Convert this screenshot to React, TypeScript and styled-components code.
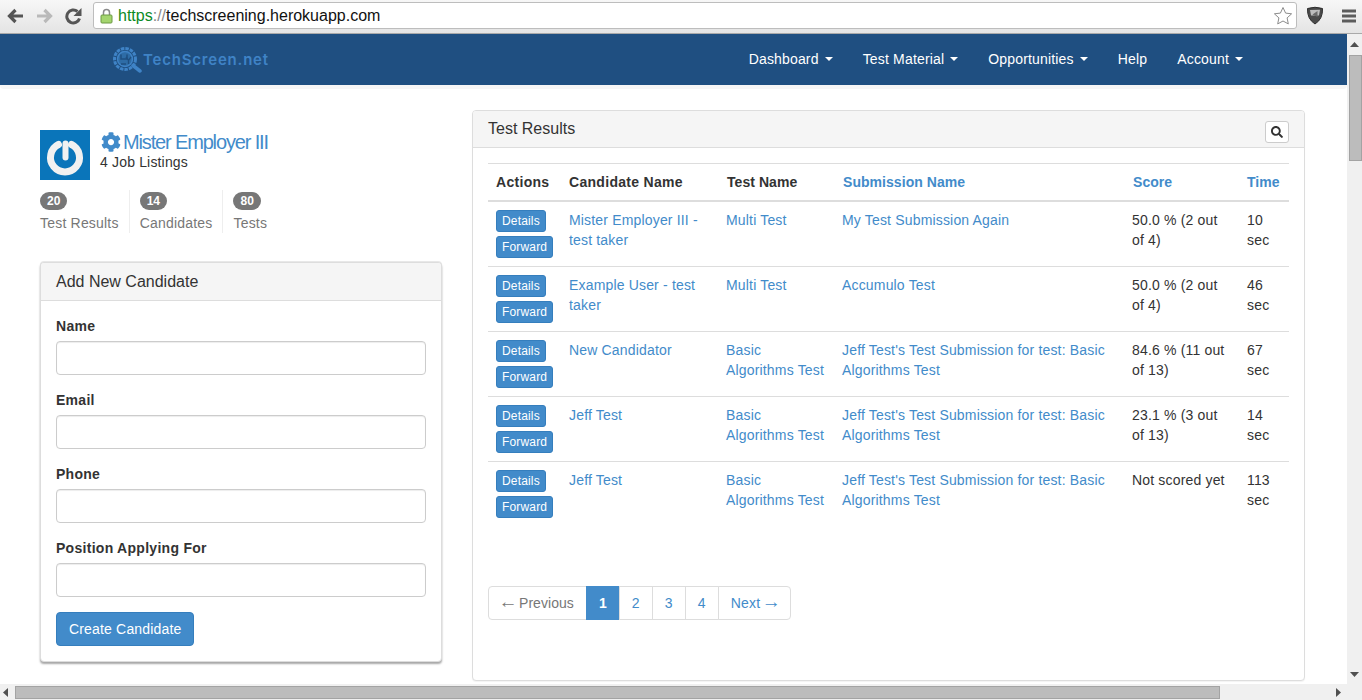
import styled, { createGlobalStyle } from "styled-components";
import { FaCog, FaSearch } from "react-icons/fa";

const GlobalStyle = createGlobalStyle`
  html, body {
    margin: 0;
    height: 100%;
    overflow: hidden;
    background: #fff;
  }

  body {
    font-family: "Liberation Sans", Arial, sans-serif;
    font-size: 14px;
    line-height: 20px;
    letter-spacing: 0.17px;
    color: #333;
  }

  * {
    box-sizing: border-box;
  }
`;

const Window = styled.div`
  width: 1362px;
  height: 700px;
  display: flex;
  flex-direction: column;
  overflow: hidden;
`;

const BrowserBar = styled.div`
  height: 34px;
  flex: none;
  display: flex;
  align-items: center;
  padding: 0 4px 2px 4px;
  background: linear-gradient(#f7f7f7, #e4e4e4);
  border-bottom: 1px solid #a9a9a9;
`;

const BarIcon = styled.svg<{ $gap?: number }>`
  flex: none;
  margin-right: ${(p) => p.$gap ?? 0}px;
`;

const AddressBox = styled.div`
  flex: none;
  width: 1204px;
  height: 27px;
  margin: 0 9px 0 9px;
  display: flex;
  align-items: center;
  padding: 0 3px 0 6px;
  background: #fff;
  border: 1px solid #bdbdbd;
  border-radius: 3px;
`;

const Url = styled.div`
  flex: 1;
  margin-left: 5px;
  font-size: 16px;
  letter-spacing: 0;
  color: #111;
  white-space: nowrap;
`;

const UrlScheme = styled.span`
  color: #0b8a24;
`;

const UrlSlashes = styled.span`
  color: #888;
`;

const Middle = styled.div`
  flex: 1;
  min-height: 0;
  display: flex;
`;

const Page = styled.div`
  flex: 1;
  min-width: 0;
  overflow: hidden;
  background: #fff;
`;

const VerticalBar = styled.div`
  width: 15px;
  flex: none;
  display: flex;
  flex-direction: column;
  align-items: center;
  background: #f0f0f0;
  padding: 8px 0 7px;
`;

const VerticalThumb = styled.div`
  width: 13px;
  height: 106px;
  margin: 8px 0 auto;
  align-self: flex-end;
  background: #bcbcbc;
  border: 1px solid #a3a3a3;
`;

const HorizontalBar = styled.div`
  height: 16px;
  flex: none;
  display: flex;
  align-items: center;
  background: #f0f0f0;
  padding-left: 3px;
`;

const HorizontalThumb = styled.div`
  width: 1205px;
  height: 13px;
  margin: 0 auto 0 7px;
  background: #bcbcbc;
  border: 1px solid #a3a3a3;
`;

const BarArrow = styled.svg<{ $right?: number }>`
  flex: none;
  margin-right: ${(p) => p.$right ?? 0}px;
`;

const NavWrap = styled.div`
  padding-bottom: 4px;
  background: #f6f6f6;
  border-radius: 0 0 4px 4px;
`;

const Navbar = styled.nav`
  height: 51px;
  display: flex;
  align-items: center;
  justify-content: space-between;
  padding: 0 89px 0 112px;
  background: #1f4f81;
`;

const Brand = styled.a`
  display: flex;
  align-items: center;
  margin-top: 1px;
`;

const BrandName = styled.span`
  font-family: Inter, sans-serif;
  font-weight: 600;
  font-size: 15px;
  letter-spacing: 0.8px;
  color: #3f83c6;
`;

const NavList = styled.div`
  display: flex;
`;

const NavItem = styled.a`
  display: flex;
  align-items: center;
  padding: 14px 15px 16px;
  color: #fff;
  font-size: 14px;
`;

const Caret = styled.span`
  width: 0;
  height: 0;
  margin-left: 6px;
  margin-top: 1px;
  border-top: 4px solid #fff;
  border-left: 4px solid transparent;
  border-right: 4px solid transparent;
`;

const Content = styled.main`
  display: flex;
  align-items: flex-start;
  gap: 30px;
  padding: 21px 42px 0 40px;
`;

const Sidebar = styled.aside`
  width: 402px;
  flex: none;
  padding-top: 20px;
`;

const Profile = styled.div`
  display: flex;
  gap: 10px;
`;

const AvatarIcon = styled.svg`
  display: block;
  flex: none;
`;

const ProfileTitle = styled.div`
  display: flex;
  align-items: center;
  height: 24px;
  color: #428bca;
  font-size: 20px;
  letter-spacing: -1.15px;
`;

const ProfileMeta = styled.div`
  margin-top: -2px;
`;

const CogIcon = styled(FaCog)`
  width: 20px;
  height: 20px;
  margin: 0 2px 0 1px;
`;

const Stats = styled.div`
  display: flex;
  margin-top: 10px;
`;

const Stat = styled.div`
  height: 43px;
  padding: 2px 10px 0;
  border-right: 1px solid #eee;
  color: #777;
  letter-spacing: 0.2px;

  &:first-child {
    padding-left: 0;
  }

  &:last-child {
    border-right: 0;
  }
`;

const Badge = styled.span`
  display: block;
  width: fit-content;
  min-width: 10px;
  height: 18px;
  padding: 3px 7px;
  margin-bottom: 3px;
  border-radius: 10px;
  background: #777;
  color: #fff;
  font-size: 12px;
  font-weight: 700;
  line-height: 12px;
  letter-spacing: 0;
`;

const Panel = styled.section<{ $raised?: boolean; $height?: number }>`
  background: #fff;
  border: 1px solid #ddd;
  border-radius: 4px;
  height: ${(p) => (p.$height ? `${p.$height}px` : "auto")};
  box-shadow: ${(p) =>
    p.$raised
      ? "0 2px 2px rgba(0, 0, 0, 0.35), 0 -1px 0 #e8e8e8"
      : "0 1px 1px rgba(0, 0, 0, 0.05)"};
`;

const PanelHeading = styled.header<{ $height?: number }>`
  display: flex;
  align-items: center;
  justify-content: space-between;
  height: ${(p) => p.$height ?? 38}px;
  padding: 0 15px;
  background: #f5f5f5;
  border-bottom: 1px solid #ddd;
  border-radius: 3px 3px 0 0;
  font-size: 16px;
  letter-spacing: 0;
  color: #333;
`;

const PanelBody = styled.div`
  padding: 15px;
`;

const FormPanel = styled(Panel)`
  margin-top: 29px;
`;

const Field = styled.div`
  margin-bottom: 15px;
`;

const Label = styled.label`
  display: block;
  margin-bottom: 5px;
  font-weight: 700;
  letter-spacing: 0.28px;
  color: #333;
`;

const TextInput = styled.input`
  display: block;
  width: 100%;
  height: 34px;
  padding: 6px 12px;
  background: #fff;
  border: 1px solid #ccc;
  border-radius: 4px;
  box-shadow: inset 0 1px 1px rgba(0, 0, 0, 0.075);
`;

const PrimaryButton = styled.button`
  display: block;
  height: 34px;
  padding: 6px 12px;
  background: #428bca;
  border: 1px solid #357ebd;
  border-radius: 4px;
  color: #fff;
  font: inherit;
  letter-spacing: 0.17px;
`;

const Results = styled(Panel)`
  flex: 1;
  min-width: 0;
`;

const SearchButton = styled.button`
  display: flex;
  align-items: center;
  justify-content: center;
  width: 24px;
  height: 22px;
  padding: 0;
  margin-top: 6px;
  background: #fff;
  border: 1px solid #ccc;
  border-radius: 3px;
  color: #333;
`;

const Table = styled.table`
  width: 100%;
  table-layout: fixed;
  border-collapse: collapse;
`;

const HeadCell = styled.th<{ $width: number; $link?: boolean; $inset?: boolean }>`
  width: ${(p) => p.$width}px;
  padding: 8px;
  padding-left: ${(p) => (p.$inset ? 9 : 8)}px;
  text-align: left;
  font-weight: 700;
  letter-spacing: ${(p) => (p.$link || p.$inset ? 0.05 : 0.3)}px;
  white-space: nowrap;
  color: ${(p) => (p.$link ? "#428bca" : "#333")};
  border-top: 1px solid #ddd;
  border-bottom: 2px solid #ddd;
`;

const Row = styled.tr`
  & + & td {
    border-top: 1px solid #ddd;
  }
`;

const Cell = styled.td`
  padding: 8px;
  vertical-align: top;
`;

const LinkText = styled.a`
  color: #428bca;
`;

const ActionStack = styled.div`
  display: flex;
  flex-direction: column;
  align-items: flex-start;
  gap: 4px;
`;

const SmallButton = styled.button`
  height: 22px;
  padding: 1px 5px;
  background: #428bca;
  border: 1px solid #357ebd;
  border-radius: 3px;
  color: #fff;
  font: inherit;
  font-size: 12px;
  line-height: 18px;
  letter-spacing: 0.17px;
`;

const Pagination = styled.div`
  display: flex;
  margin-top: 60px;
`;

const PageLink = styled.a<{ $active?: boolean; $muted?: boolean }>`
  display: block;
  flex: none;
  height: 34px;
  padding: 6px 12px;
  margin-left: -1px;
  white-space: nowrap;
  background: ${(p) => (p.$active ? "#428bca" : "#fff")};
  border: 1px solid ${(p) => (p.$active ? "#428bca" : "#ddd")};
  color: ${(p) => (p.$active ? "#fff" : p.$muted ? "#777" : "#428bca")};
  font-weight: ${(p) => (p.$active ? 700 : 400)};
  letter-spacing: ${(p) => (p.$muted ? 0.05 : 0.17)}px;

  &:first-child {
    margin-left: 0;
    border-radius: 4px 0 0 4px;
  }

  &:last-child {
    border-radius: 0 4px 4px 0;
  }
`;

const ArrowGlyph = styled.span`
  font-size: 19px;
  line-height: 0;
  margin: 0 -2.5px;
`;

const rows = [
  {
    candidate: "Mister Employer III - test taker",
    test: "Multi Test",
    submission: "My Test Submission Again",
    score: "50.0 % (2 out of 4)",
    time: "10 sec",
  },
  {
    candidate: "Example User - test taker",
    test: "Multi Test",
    submission: "Accumulo Test",
    score: "50.0 % (2 out of 4)",
    time: "46 sec",
  },
  {
    candidate: "New Candidator",
    test: "Basic Algorithms Test",
    submission: "Jeff Test's Test Submission for test: Basic Algorithms Test",
    score: "84.6 % (11 out of 13)",
    time: "67 sec",
  },
  {
    candidate: "Jeff Test",
    test: "Basic Algorithms Test",
    submission: "Jeff Test's Test Submission for test: Basic Algorithms Test",
    score: "23.1 % (3 out of 13)",
    time: "14 sec",
  },
  {
    candidate: "Jeff Test",
    test: "Basic Algorithms Test",
    submission: "Jeff Test's Test Submission for test: Basic Algorithms Test",
    score: "Not scored yet",
    time: "113 sec",
  },
];

const fields = ["Name", "Email", "Phone", "Position Applying For"];
const navItems = [
  { label: "Dashboard", caret: true },
  { label: "Test Material", caret: true },
  { label: "Opportunities", caret: true },
  { label: "Help", caret: false },
  { label: "Account", caret: true },
];

function ChromeBar() {
  return (
    <BrowserBar>
      <BarIcon width="22" height="18" viewBox="0 0 22 18" $gap={7}>
        <path d="M19 9H6M11.500 3 5.500 9l6 6" fill="none" stroke="#555" strokeWidth="3.200" />
      </BarIcon>
      <BarIcon width="22" height="18" viewBox="0 0 22 18" $gap={7}>
        <path d="M4 9h13M11.500 3l6 6-6 6" fill="none" stroke="#b9b9b9" strokeWidth="3.200" />
      </BarIcon>
      <BarIcon width="22" height="18" viewBox="0 0 22 18">
        <path d="M17.500 11.500A6.500 6.500 0 1 1 15.500 4.500" fill="none" stroke="#555" strokeWidth="3" />
        <path d="M19.500 1v8h-8z" fill="#555" />
      </BarIcon>
      <AddressBox>
        <svg width="13" height="16" viewBox="0 0 13 16">
          <path d="M3.500 7V4.500a3 3 0 0 1 6 0V7" fill="none" stroke="#8a8a8a" strokeWidth="1.500" />
          <rect x="1" y="7" width="11" height="8" rx="1" fill="#a4d56f" stroke="#6d9a45" />
        </svg>
        <Url>
          <UrlScheme>https</UrlScheme>
          <UrlSlashes>://</UrlSlashes>
          techscreening.herokuapp.com
        </Url>
        <svg width="20" height="19" viewBox="0 0 20 19">
          <path
            d="m10 1.500 2.600 5.600 6 .7-4.500 4.100 1.200 6L10 15l-5.300 2.900 1.200-6L1.400 7.800l6-.7z"
            fill="#fff"
            stroke="#8c8c8c"
          />
        </svg>
      </AddressBox>
      <BarIcon width="18" height="19" viewBox="0 0 18 19" $gap={18}>
        <path d="M1.500 2.500Q9 0 16.500 2.500 17 13 9 18 1 13 1.500 2.500Z" fill="#4a4a4a" stroke="#2e2e2e" />
        <path d="M4 4 14 3.800 13 9.500H5z" fill="#bdbdbd" />
        <path d="M11.500 5 6.500 8.500l5 2.500z" fill="#6a6a6a" />
      </BarIcon>
      <BarIcon width="14" height="14" viewBox="0 0 14 14">
        <path d="M0 2h14M0 7h14M0 12h14" stroke="#5c5c5c" strokeWidth="3.200" />
      </BarIcon>
    </BrowserBar>
  );
}

function Logo() {
  return (
    <Brand>
      <svg width="31" height="26" viewBox="0 0 31 26">
        <circle cx="13" cy="12" r="10.500" fill="none" stroke="#3f83c6" strokeWidth="3" strokeDasharray="3.500 1" />
        <circle cx="13" cy="12" r="7.500" fill="#2e6ca6" stroke="#3f83c6" strokeWidth="1.500" />
        <path d="M9 7.500v4.500h6V7.500M9 17h5" fill="none" stroke="#1f4f81" strokeWidth="1.500" />
        <path d="m14 10 2.500 3.500L19 10m-2.500 3.500V17" fill="none" stroke="#1f4f81" strokeWidth="1.300" />
        <path d="m21 18.500 7 5.500" stroke="#3f83c6" strokeWidth="3.500" strokeLinecap="round" />
      </svg>
      <BrandName>TechScreen.net</BrandName>
    </Brand>
  );
}

function Candidates() {
  return (
    <Sidebar>
      <Profile>
        <AvatarIcon width="50" height="50" viewBox="0 0 50 50">
          <rect width="50" height="50" fill="#0a75ba" />
          <path
            d="M18.500 14.500a14.500 14.500 0 1 0 13 0"
            fill="none"
            stroke="#f1f1f1"
            strokeWidth="7"
            strokeLinecap="round"
          />
          <path d="M25.500 13.500v14" stroke="#f1f1f1" strokeWidth="6" strokeLinecap="round" />
        </AvatarIcon>
        <div>
          <ProfileTitle>
            <CogIcon />
            Mister Employer III
          </ProfileTitle>
          <ProfileMeta>4 Job Listings</ProfileMeta>
        </div>
      </Profile>
      <Stats>
        <Stat>
          <Badge>20</Badge>
          Test Results
        </Stat>
        <Stat>
          <Badge>14</Badge>
          Candidates
        </Stat>
        <Stat>
          <Badge>80</Badge>
          Tests
        </Stat>
      </Stats>
      <FormPanel $raised>
        <PanelHeading>Add New Candidate</PanelHeading>
        <PanelBody>
          {fields.map((field) => (
            <Field key={field}>
              <Label>{field}</Label>
              <TextInput />
            </Field>
          ))}
          <PrimaryButton>Create Candidate</PrimaryButton>
        </PanelBody>
      </FormPanel>
    </Sidebar>
  );
}

function TestResults() {
  return (
    <Results $height={571}>
      <PanelHeading $height={37}>
        Test Results
        <SearchButton>
          <FaSearch size={12} />
        </SearchButton>
      </PanelHeading>
      <PanelBody>
        <Table>
          <thead>
            <tr>
              <HeadCell $width={73}>Actions</HeadCell>
              <HeadCell $width={157}>Candidate Name</HeadCell>
              <HeadCell $width={116} $inset>
                Test Name
              </HeadCell>
              <HeadCell $width={290} $link $inset>
                Submission Name
              </HeadCell>
              <HeadCell $width={115} $link $inset>
                Score
              </HeadCell>
              <HeadCell $width={50} $link>
                Time
              </HeadCell>
            </tr>
          </thead>
          <tbody>
            {rows.map((row, i) => (
              <Row key={i}>
                <Cell>
                  <ActionStack>
                    <SmallButton>Details</SmallButton>
                    <SmallButton>Forward</SmallButton>
                  </ActionStack>
                </Cell>
                <Cell>
                  <LinkText>{row.candidate}</LinkText>
                </Cell>
                <Cell>
                  <LinkText>{row.test}</LinkText>
                </Cell>
                <Cell>
                  <LinkText>{row.submission}</LinkText>
                </Cell>
                <Cell>{row.score}</Cell>
                <Cell>{row.time}</Cell>
              </Row>
            ))}
          </tbody>
        </Table>
        <Pagination>
          <PageLink $muted>
            <ArrowGlyph>←</ArrowGlyph> Previous
          </PageLink>
          <PageLink $active>1</PageLink>
          <PageLink>2</PageLink>
          <PageLink>3</PageLink>
          <PageLink>4</PageLink>
          <PageLink>
            Next <ArrowGlyph>→</ArrowGlyph>
          </PageLink>
        </Pagination>
      </PanelBody>
    </Results>
  );
}

export default function App() {
  return (
    <Window>
      <GlobalStyle />
      <ChromeBar />
      <Middle>
        <Page>
          <NavWrap>
            <Navbar>
              <Logo />
              <NavList>
                {navItems.map((item) => (
                  <NavItem key={item.label}>
                    {item.label}
                    {item.caret && <Caret />}
                  </NavItem>
                ))}
              </NavList>
            </Navbar>
          </NavWrap>
          <Content>
            <Candidates />
            <TestResults />
          </Content>
        </Page>
        <VerticalBar>
          <BarArrow width="9" height="5" viewBox="0 0 9 5">
            <path d="M4.500 0 9 5H0z" fill="#505050" />
          </BarArrow>
          <VerticalThumb />
          <BarArrow width="9" height="5" viewBox="0 0 9 5">
            <path d="M0 0h9L4.500 5z" fill="#505050" />
          </BarArrow>
        </VerticalBar>
      </Middle>
      <HorizontalBar>
        <BarArrow width="5" height="9" viewBox="0 0 5 9">
          <path d="M5 0v9L0 4.500z" fill="#505050" />
        </BarArrow>
        <HorizontalThumb />
        <BarArrow width="5" height="9" viewBox="0 0 5 9" $right={21}>
          <path d="M0 0v9l5-4.500z" fill="#505050" />
        </BarArrow>
      </HorizontalBar>
    </Window>
  );
}
